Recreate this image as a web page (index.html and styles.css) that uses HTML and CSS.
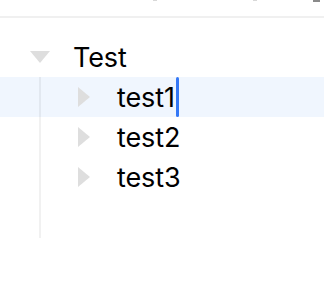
FILE: index.html
```html
<!DOCTYPE html>
<html>
<head>
<meta charset="utf-8">
<link rel="stylesheet" href="styles.css">
</head>
<body>
<div class="toolbar">
  <span class="mark m1"></span>
  <span class="mark m2"></span>
  <span class="mark m3"></span>
</div>
<div class="tree">
  <div class="row">
    <span class="toggle"><span class="tri-down"></span></span>
    <span class="label">Test</span>
  </div>
  <div class="children">
    <div class="row child active">
      <span class="toggle"><span class="tri-right"></span></span>
      <span class="label">test1</span><span class="caret"></span>
    </div>
    <div class="row child">
      <span class="toggle"><span class="tri-right"></span></span>
      <span class="label">test2</span>
    </div>
    <div class="row child">
      <span class="toggle"><span class="tri-right"></span></span>
      <span class="label">test3</span>
    </div>
  </div>
</div>
</body>
</html>
```
FILE: styles.css
```css
html, body {
  margin: 0;
  padding: 0;
  background: #fff;
}
body {
  width: 324px;
  height: 288px;
  overflow: hidden;
  font-family: Inter, "Noto Sans", sans-serif;
}
.toolbar {
  height: 16px;
  border-bottom: 2px solid #f0f0f0;
  display: flex;
  align-items: flex-start;
}
.mark {
  display: block;
  height: 1px;
  background: #d8d8d8;
}
.m1 { margin-left: 153px; width: 4px; }
.m2 { margin-left: 96px; width: 4px; }
.m3 { margin-left: 56px; width: 7px; background: #8a8a8a; height: 2px; }
.tree {
  padding-top: 19px;
}
.row {
  display: flex;
  align-items: center;
  height: 40px;
  padding-left: 20px;
}
.row.child {
  padding-left: 64px;
}
.row.active {
  background: #f0f6fe;
}
.toggle {
  width: 40px;
  height: 40px;
  display: flex;
  align-items: center;
  justify-content: center;
  margin-right: 13px;
  flex: none;
}
.tri-down {
  width: 0;
  height: 0;
  border-left: 10px solid transparent;
  border-right: 10px solid transparent;
  border-top: 12px solid #dedede;
}
.tri-right {
  width: 0;
  height: 0;
  border-top: 10px solid transparent;
  border-bottom: 10px solid transparent;
  border-left: 12px solid #dedede;
}
.label {
  font-size: 27px;
  color: #000;
  line-height: 40px;
  padding-top: 2px;
  letter-spacing: -0.1px;
}
.caret {
  width: 3px;
  height: 40px;
  background: #3478f6;
  border-radius: 2px;
  margin-left: 1px;
}
.children {
  position: relative;
  padding-bottom: 41px;
}
.children::before {
  content: "";
  position: absolute;
  left: 39px;
  top: 0;
  bottom: 0;
  width: 2px;
  background: rgba(0, 0, 0, 0.055);
  z-index: 1;
}
```
